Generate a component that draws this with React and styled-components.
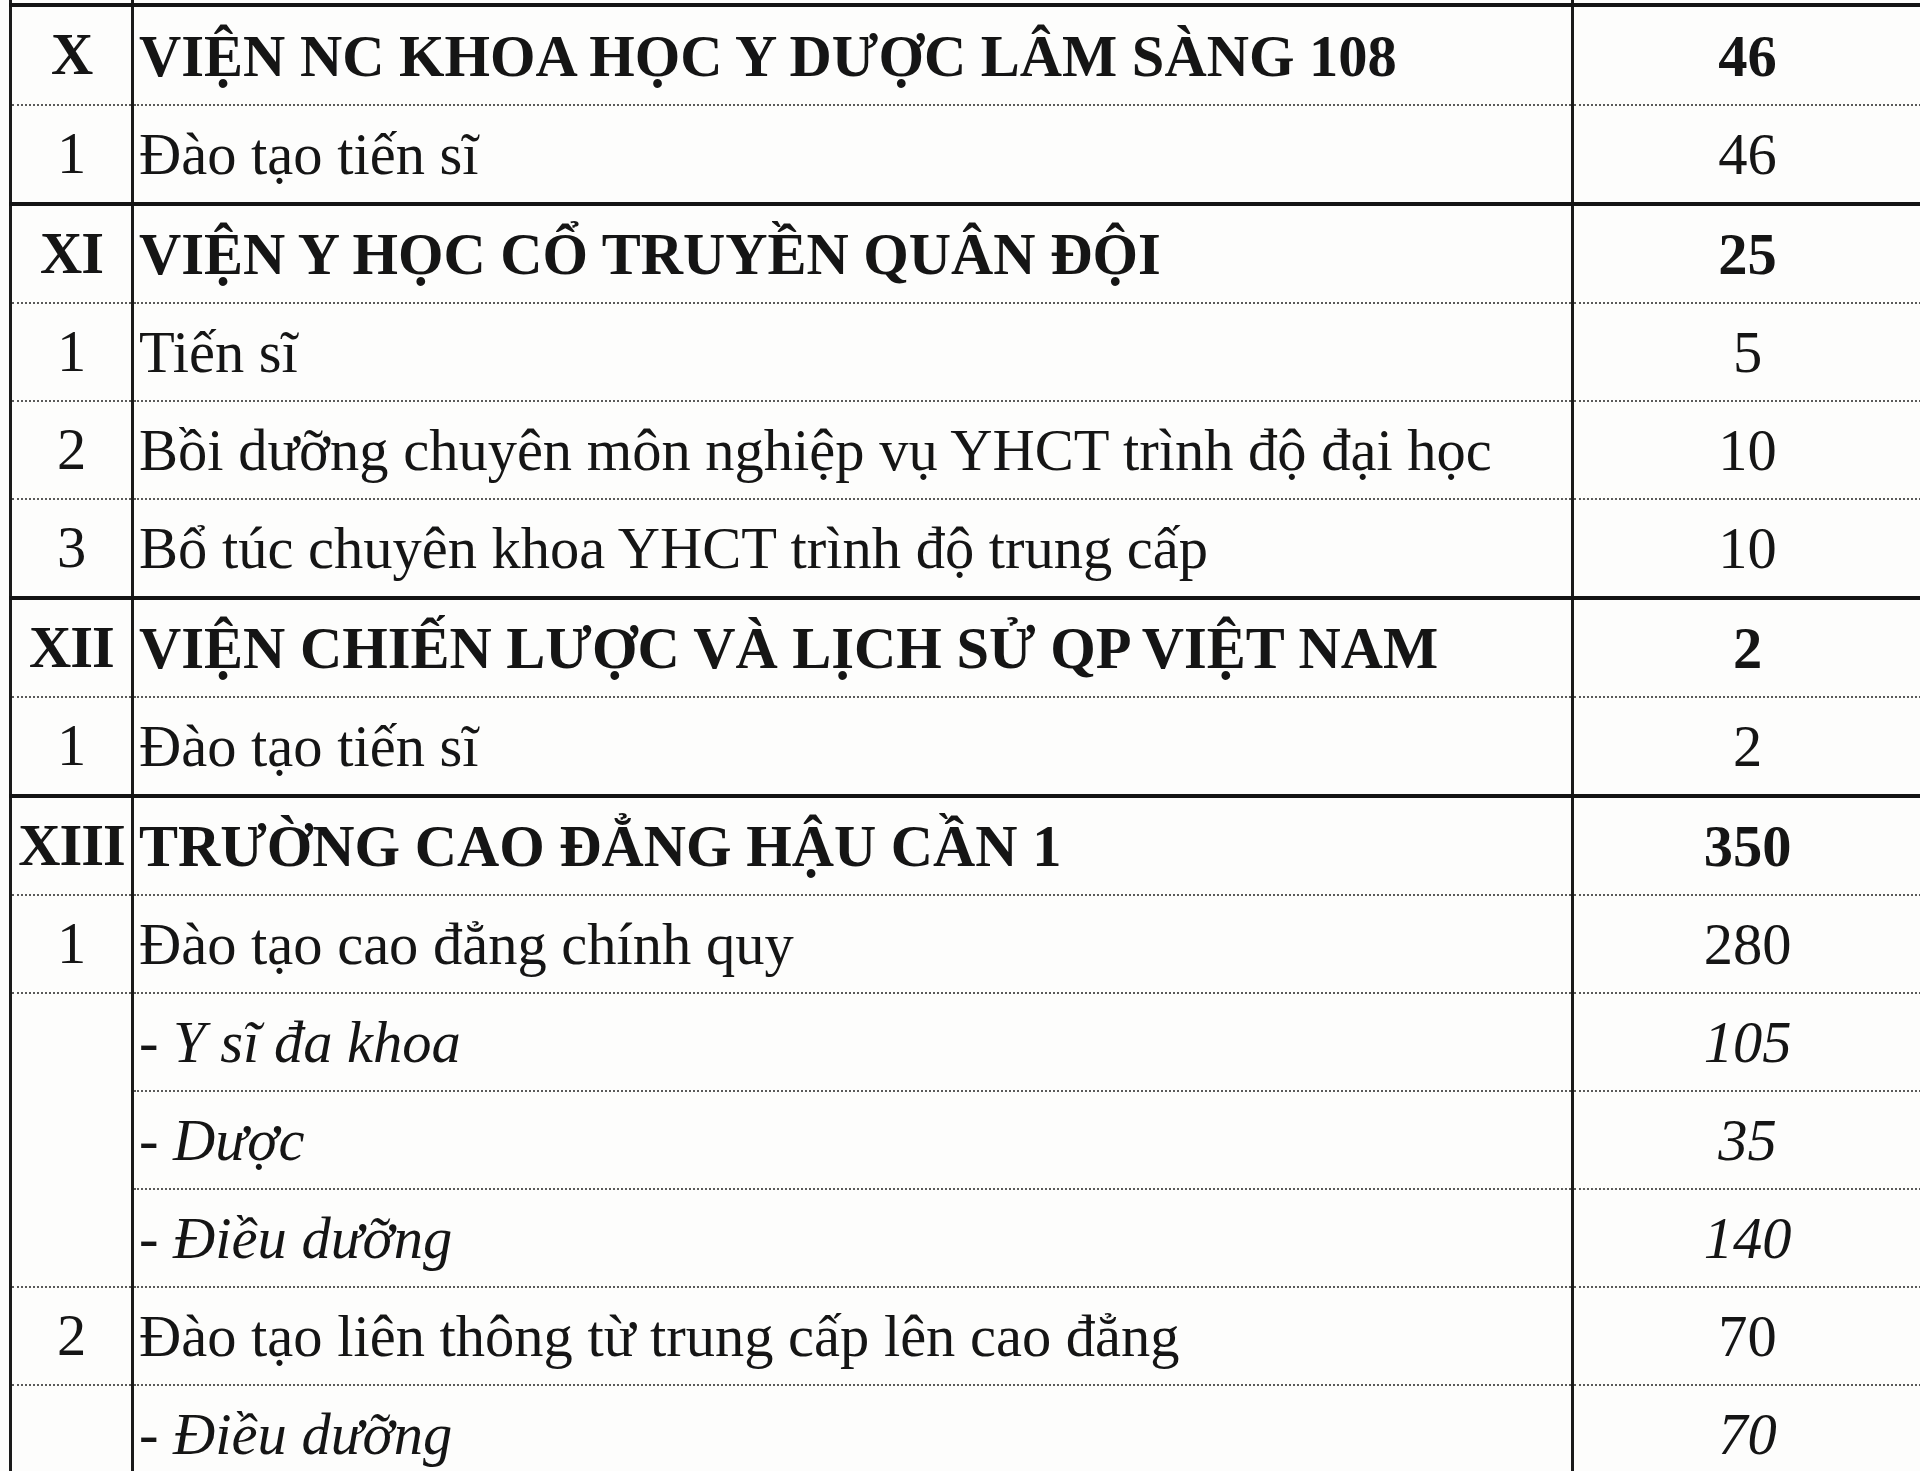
import React from "react";
import styled, { createGlobalStyle } from "styled-components";

const GlobalStyle = createGlobalStyle`
  html, body {
    margin: 0;
    padding: 0;
    background: #fdfdfc;
    overflow: hidden;
  }
`;

const rows = [
  { no: "X", name: "VIỆN NC KHOA HỌC Y DƯỢC LÂM SÀNG 108", qty: "46", kind: "head" },
  { no: "1", name: "Đào tạo tiến sĩ", qty: "46" },
  { no: "XI", name: "VIỆN Y HỌC CỔ TRUYỀN QUÂN ĐỘI", qty: "25", kind: "head" },
  { no: "1", name: "Tiến sĩ", qty: "5" },
  { no: "2", name: "Bồi dưỡng chuyên môn nghiệp vụ YHCT trình độ đại học", qty: "10" },
  { no: "3", name: "Bổ túc chuyên khoa YHCT trình độ trung cấp", qty: "10" },
  { no: "XII", name: "VIỆN CHIẾN LƯỢC VÀ LỊCH SỬ QP VIỆT NAM", qty: "2", kind: "head" },
  { no: "1", name: "Đào tạo tiến sĩ", qty: "2" },
  { no: "XIII", name: "TRƯỜNG CAO ĐẲNG HẬU CẦN 1", qty: "350", kind: "head" },
  { no: "1", name: "Đào tạo cao đẳng chính quy", qty: "280" },
  { no: "", name: "- Y sĩ đa khoa", qty: "105", kind: "sub", span: 3 },
  { name: "- Dược", qty: "35", kind: "sub", merged: true },
  { name: "- Điều dưỡng", qty: "140", kind: "sub", merged: true },
  { no: "2", name: "Đào tạo liên thông từ trung cấp lên cao đẳng", qty: "70" },
  { no: "", name: "- Điều dưỡng", qty: "70", kind: "sub" },
];

const App = () => {
  return (
    <Page>
      <GlobalStyle />
      <Table>
        <colgroup>
          <col style={{ width: 122 }} />
          <col style={{ width: 1440 }} />
          <col style={{ width: 350 }} />
        </colgroup>
        <tbody>
          <StubRow>
            <StubCell />
            <StubCell />
            <StubCell />
          </StubRow>
          {rows.map((r, i) => (
            <Row key={i} $thick={r.kind === "head"} $first={i === 0}>
              {!r.merged && (
                <NoCell $bold={r.kind === "head"} rowSpan={r.span || 1}>
                  {r.no}
                </NoCell>
              )}
              <NameCell $kind={r.kind}>{r.name}</NameCell>
              <QtyCell $kind={r.kind}>{r.qty}</QtyCell>
            </Row>
          ))}
        </tbody>
      </Table>
    </Page>
  );
};

export default App;

const Page = styled.div`
  width: 1920px;
  height: 1471px;
  padding-left: 9px;
  box-sizing: border-box;
  overflow: hidden;
  font-family: "Liberation Serif", "Times New Roman", serif;
  color: #151515;
`;

const Table = styled.table`
  border-collapse: collapse;
  table-layout: fixed;
  width: 1912px;
`;

const StubRow = styled.tr`
  height: 3px;
`;

const StubCell = styled.td`
  padding: 0;
  height: 3px;
  border-left: 3px solid #1a1a1a;
  border-right: 3px solid #1a1a1a;
`;

const Row = styled.tr`
  & > td {
    border-top: ${(p) => (p.$thick ? "4px solid #141414" : "2px dotted #5a5a5a")};
    height: ${(p) => (p.$first ? "94px" : "93px")};
  }
`;

const Cell = styled.td`
  padding: 3px 0 0 0;
  font-size: 58.5px;
  line-height: 1;
  vertical-align: middle;
  border-left: 3px solid #1a1a1a;
  border-right: 3px solid #1a1a1a;
  white-space: nowrap;
`;

const NoCell = styled(Cell)`
  text-align: center;
  padding-top: 0;
  font-weight: ${(p) => (p.$bold ? 700 : 400)};
  letter-spacing: ${(p) => (p.$bold ? "-1px" : "0")};
`;

const NameCell = styled(Cell)`
  text-align: left;
  padding-left: 5px;
  font-weight: ${(p) => (p.$kind === "head" ? 700 : 400)};
  font-style: ${(p) => (p.$kind === "sub" ? "italic" : "normal")};
`;

const QtyCell = styled(Cell)`
  text-align: center;
  font-weight: ${(p) => (p.$kind === "head" ? 700 : 400)};
  font-style: ${(p) => (p.$kind === "sub" ? "italic" : "normal")};
`;
